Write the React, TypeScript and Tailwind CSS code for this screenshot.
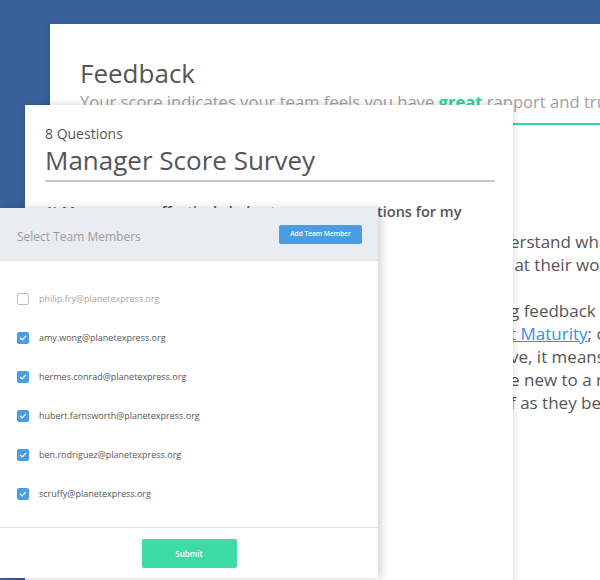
import React from "react";

const members = [
  { email: "philip.fry@planetexpress.org", checked: false },
  { email: "amy.wong@planetexpress.org", checked: true },
  { email: "hermes.conrad@planetexpress.org", checked: true },
  { email: "hubert.farnsworth@planetexpress.org", checked: true },
  { email: "ben.rodriguez@planetexpress.org", checked: true },
  { email: "scruffy@planetexpress.org", checked: true },
];

// lines of the feedback text; only the tail of each line shows past the survey card
const para1 = [
  { hidden: "This means your direct reports feel like you und", shown: "erstand what" },
  { hidden: "motivates them and that you support them", shown: "\u00a0at their work." },
];

function Checkbox({ checked }: { checked: boolean }) {
  if (!checked) {
    return <span className="w-3 h-3 rounded-[2px] border-[1.5px] border-[#bdbdbd] bg-white shrink-0" />;
  }
  return (
    <span className="w-3 h-3 rounded-[2px] bg-[#4a9de0] shrink-0 flex items-center justify-center">
      <svg width="8" height="8" viewBox="0 0 8 8" fill="none">
        <path d="M1.3 4.2 L3.2 5.9 L6.7 2.2" stroke="white" strokeWidth="1.2" strokeLinecap="round" strokeLinejoin="round" />
      </svg>
    </span>
  );
}

function Line({ hidden, children }: { hidden: string; children: React.ReactNode }) {
  return (
    <div className="flex whitespace-nowrap">
      <span className="w-[430px] shrink-0 overflow-hidden flex justify-end">{hidden}</span>
      <span>{children}</span>
    </div>
  );
}

export default function App() {
  return (
    <div
      className="relative w-[600px] h-[580px] overflow-hidden bg-[#39609b]"
      style={{ fontFamily: '"Open Sans", "Noto Sans", sans-serif' }}
    >
      {/* back card: feedback */}
      <div className="absolute left-[50px] top-[24px] w-[640px] h-[600px] bg-white shadow-[0_0_6px_rgba(0,0,0,0.15)] pt-[34px]">
        <div className="pl-[30px]">
          <h1 className="text-[26px] leading-[30px] text-[#555]">Feedback</h1>
          <p className="mt-[2px] text-[16.6px] leading-[23px] text-[#a0a0a0] whitespace-nowrap">
            Your score indicates your team feels you have{" "}
            <span className="font-bold text-[#2fd39b]">great</span> rapport and trust with you.
          </p>
        </div>
        <div className="mt-[10px] h-[2px] bg-[#2fd8a0]" />
        <div className="pl-[30px] mt-[105px] text-[17px] leading-[23px] text-[#555]">
          {para1.map((l) => (
            <Line key={l.shown} hidden={l.hidden}>{l.shown}</Line>
          ))}
          <div className="h-[23px]" />
          <Line hidden="If you have been working on givin">g feedback</Line>
          <Line hidden="have a look at our guide on Engagemen">
            <span className="text-[#3b8fd9] underline">t Maturity</span>; check
          </Line>
          <Line hidden="If your score is more negati">ve, it means</Line>
          <Line hidden="your team members may b">e new to a role</Line>
          <Line hidden="and not yet as comfortable with yoursel">f as they become</Line>
        </div>
      </div>

      {/* middle card: survey */}
      <div className="absolute left-[25px] top-[105px] w-[488px] h-[500px] bg-white shadow-[0_0_8px_rgba(0,0,0,0.18)] pl-[20px] pr-[18px] pt-[19px]">
        <div className="text-[14px] leading-[20px] text-[#555]">8 Questions</div>
        <div className="text-[26px] leading-[32px] text-[#555] border-b-2 border-[#c8c8c8] pb-[4px]">
          Manager Score Survey
        </div>
        <p className="mt-[20px] text-[14.5px] leading-[20px] font-semibold text-[#555] whitespace-nowrap">
          1) My manager effectively helps to answer questions for my
        </p>
      </div>

      {/* front card: team members */}
      <div className="absolute left-0 top-[208px] w-[378px] h-[370px] bg-white shadow-[3px_0_8px_rgba(0,0,0,0.18)] flex flex-col">
        <div className="h-[53px] bg-[#e9ecf0] border-b border-[#dfe2e6] flex items-center justify-between pl-[17px] pr-[16px] shrink-0">
          <span className="pt-[5px] text-[12px] text-[#9d9d9d]">Select Team Members</span>
          <button className="w-[83px] h-[19px] rounded-[2px] bg-[#4a9de0] text-white text-[6.6px] font-semibold">
            Add Team Member
          </button>
        </div>
        <div className="pt-[18px] flex-1">
          {members.map((m) => (
            <div key={m.email} className="h-[39px] flex items-center gap-[10px] pl-[17px]">
              <Checkbox checked={m.checked} />
              <span className={`text-[9px] ${m.checked ? "text-[#555]" : "text-[#a8a8a8]"}`}>{m.email}</span>
            </div>
          ))}
        </div>
        <div className="h-[51px] border-t border-[#e4e4e4] flex justify-center pt-[11px] shrink-0">
          <button className="w-[95px] h-[29px] rounded-[2px] bg-[#3ddba6] text-white text-[8px] font-semibold">
            Submit
          </button>
        </div>
      </div>
    </div>
  );
}
